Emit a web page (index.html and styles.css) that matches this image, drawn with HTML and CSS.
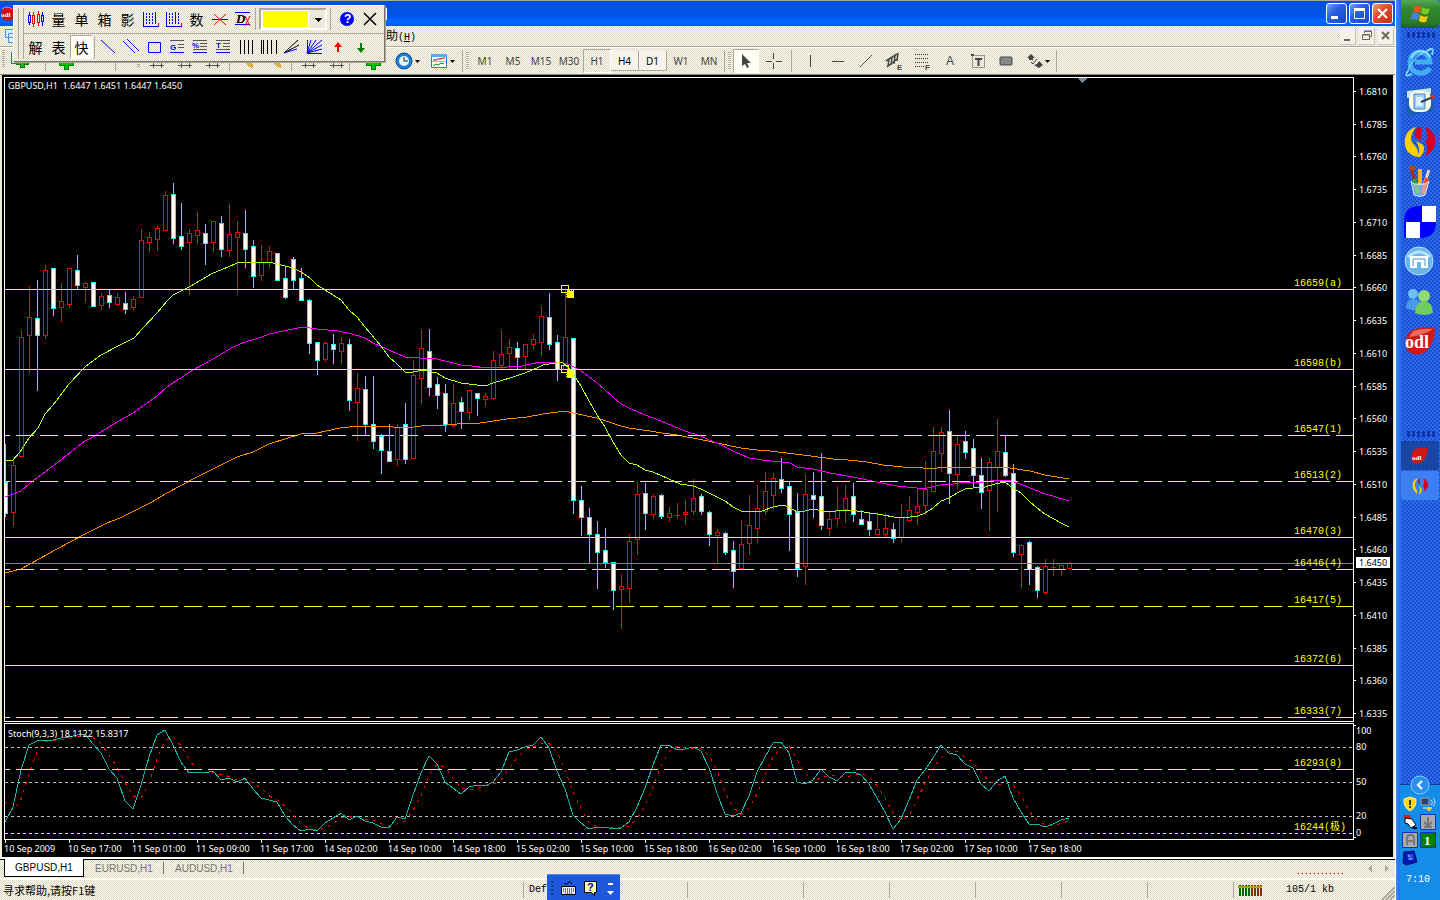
FILE: index.html
```html
<!DOCTYPE html>
<html lang="zh">
	<head>
		<meta charset="utf-8" />
		<title>GBPUSD,H1</title>
		<link rel="stylesheet" href="styles.css">
	</head>
	<body>
		<main class="app">
			<header class="titlebar">
				<svg class="app-icon" width="16" height="20"><circle cx="8" cy="10" r="7" fill="#c81414"/><path d="M2 5q5-4 10 0" fill="none" stroke="#f88"/><text x="1" y="13" class="logo-text">odl</text></svg>
				<span class="title-end"></span>
				<div class="win-btns">
					<button class="win-btn" aria-label="最小化"><svg width="19" height="19"><path d="M4 12h7v3H4z" fill="#fff"/></svg></button>
					<button class="win-btn" aria-label="还原"><svg width="19" height="19"><path d="M4.500 5.500h10v9h-10z" fill="none" stroke="#fff"/><path d="M4 4h11v3H4z" fill="#fff"/></svg></button>
					<button class="win-btn close" aria-label="关闭"><svg width="19" height="19"><path d="M5 5l9 9M14 5l-9 9" stroke="#fff" stroke-width="2"/></svg></button>
				</div>
			</header>

			<nav class="menubar">
				<svg class="doc-icon" width="16" height="18"><path d="M5.500 2.500h8v8h-8zM8.500 6.500h7v9h-7z" fill="#dff0ff" stroke="#4a90e0"/></svg>
				<a class="menu-item" href="#">助<span class="menu-key">(<u>H</u>)</span></a>
				<div class="mdi-btns">
					<button aria-label="最小化"><svg width="15" height="16"><path d="M4 11h6v2H4z" fill="#6b6958"/></svg></button>
					<button aria-label="还原"><svg width="15" height="16"><path d="M5.500 5V3.500h7v5H11M5 3h8M3 7h8" fill="none" stroke="#6b6958"/><path d="M3.500 6.500h7v5h-7z" fill="none" stroke="#6b6958"/></svg></button>
					<button aria-label="关闭"><svg width="15" height="16"><path d="M4 4l7 7M11 4l-7 7" stroke="#6b6958" stroke-width="2"/></svg></button>
				</div>
			</nav>

			<div class="toolbar">
				<svg class="tool-strip" width="391" height="28" shape-rendering="crispEdges">
					<g fill="#00c800" stroke="#008000"><path d="M20 9h4v5h4v3h-4v3h-4v-3h-4v-3h4zM64 9h4v5h5v4h-5v4h-4v-4h-5v-4h5zM371 9h4v5h5v4h-5v4h-4v-4h-5v-4h5z"/></g>
					<path d="M11.500 5v11h4" fill="none" stroke="#36c"/>
					<path d="M3.500 3v18" stroke="#aaa899" stroke-width="3" stroke-dasharray="1 1"/>
					<path d="M138.500 3v18" stroke="#aaa899" stroke-width="3" stroke-dasharray="1 1"/>
					<path d="M45.500 2v22M115.500 2v22M229.500 2v22M291.500 2v22M349.500 2v22" stroke="#aaa899"/>
					<path d="M150 18.500h14M153.500 16v5M161.500 16v5M178 18.500h14M181.500 16v5M189.500 16v5M206 18.500h14M209.500 16v5M217.500 16v5M302 18.500h14M305.500 16v5M313.500 16v5M330 18.500h14M333.500 16v5M341.500 16v5" stroke="#555"/>
					<path d="M243 11l10 9M271 11l10 9" stroke="#d8b040" stroke-width="4"/>
					<path d="M80 15h5M88 15h3M96 15h4M103 15h2" stroke="#222" stroke-width="2"/>
				</svg>
				<button class="tool menu-tool" aria-label="周期"><svg width="32" height="24"><circle cx="11" cy="12" r="8" fill="#1a7fd8" stroke="#0a4c96"/><circle cx="11" cy="12" r="5" fill="#e8f6ff"/><path d="M11 8v4h4" fill="none" stroke="#123"/><path d="M22 11h5l-2.500 3z"/></svg></button>
				<button class="tool menu-tool" aria-label="模板"><svg width="32" height="24"><path d="M3.500 5.500h15v13h-15z" fill="#fff" stroke="#2878c8"/><path d="M3 5h16v3H3z" fill="#5aaaf0"/><path d="M5 11h3l2-1h3l2-1h2" fill="none" stroke="#b00"/><path d="M5 17l3-2 2 1 3-2 3 1" fill="none" stroke="#080"/><path d="M4 12.500h14" stroke="#8bd"/><path d="M22 11h5l-2.500 3z"/></svg></button>
				<span class="sep"></span><span class="grip"></span>
				<button class="tool period">M1</button>
				<button class="tool period">M5</button>
				<button class="tool period">M15</button>
				<button class="tool period">M30</button>
				<button class="tool period pressed">H1</button>
				<button class="tool period raised">H4</button>
				<button class="tool period raised">D1</button>
				<button class="tool period">W1</button>
				<button class="tool period">MN</button>
				<span class="sep"></span><span class="grip"></span>
				<button class="tool pressed light" aria-label="光标"><svg width="24" height="24"><path d="M8 5v12l3-2 2 4 2-1-2-4h4z" fill="#444"/></svg></button>
				<button class="tool" aria-label="十字线"><svg width="28" height="24" shape-rendering="crispEdges"><path d="M14.500 4v6M14.500 14v6M7 12.500h6M17 12.500h6" stroke="#444"/></svg></button>
				<span class="sep space"></span>
				<button class="tool" aria-label="垂直线"><svg width="28" height="24" shape-rendering="crispEdges"><path d="M14.500 6v12" stroke="#444"/></svg></button>
				<button class="tool" aria-label="水平线"><svg width="28" height="24" shape-rendering="crispEdges"><path d="M8 12.500h12" stroke="#444"/></svg></button>
				<button class="tool" aria-label="趋势线"><svg width="28" height="24"><path d="M8 18L20 6" stroke="#444"/></svg></button>
				<button class="tool" aria-label="等距通道"><svg width="28" height="24"><path d="M6 12l11-7M7 18l10-8M9 10l-1 7M12 8l-1 8M15 6l-1 9M18 4l-1 8" stroke="#444" stroke-width="1.500"/><text x="17" y="21" class="ico-letter">E</text></svg></button>
				<button class="tool" aria-label="斐波纳契"><svg width="28" height="24" shape-rendering="crispEdges"><path d="M7 5.500h14M7 9.500h14M7 13.500h14M7 17.500h10" stroke="#444" stroke-dasharray="1 1"/><text x="17" y="21" class="ico-letter">F</text></svg></button>
				<button class="tool letter">A</button>
				<button class="tool" aria-label="文本标签"><svg width="28" height="24"><path d="M8.500 6.500h12v12h-12z" fill="none" stroke="#444" stroke-dasharray="1 1"/><path d="M11 9h7v2h-2.500v6h-2v-6H11z" fill="#444"/><path d="M7 5h3v2H7z" fill="#444"/></svg></button>
				<button class="tool" aria-label="矩形"><svg width="28" height="24"><rect x="8" y="8" width="12" height="8" rx="1" fill="#888" stroke="#444"/></svg></button>
				<button class="tool menu-tool" aria-label="箭头"><svg width="32" height="24"><path d="M9 5l4 4h-2v2H7V9H5zM17 19l4-3-4-4-2 3-3 1z" fill="#444"/><path d="M9 13l2 2 4-5" stroke="#444" fill="none"/><path d="M23 11h5l-2.500 3z"/></svg></button>
				<span class="sep"></span>
			</div>

			<section class="chart">
				<div class="pane-row price-row">
					<svg class="pane" id="price"></svg>
					<svg class="axis" id="priceAxis"></svg>
				</div>
				<div class="pane-row stoch-row">
					<svg class="pane" id="stoch"></svg>
					<svg class="axis" id="stochAxis"></svg>
				</div>
				<svg class="time-axis" id="timeAxis"></svg>
			</section>

			<div class="tabs">
				<button class="tab active">GBPUSD,H1</button>
				<button class="tab">EURUSD,H1</button>
				<button class="tab">AUDUSD,H1</button>
				<span class="red-dots"></span>
				<svg class="tab-arrows" width="24" height="10"><path d="M5 1v7L1 4.500zM18 1v7l4-3.500z" fill="#aaa899"/></svg>
			</div>

			<footer class="status">
				<span class="cell help">寻求帮助,请按F1键</span>
				<span class="cell profile">Def</span>
				<span class="cell wide"></span>
				<span class="cell"></span><span class="cell"></span><span class="cell"></span><span class="cell"></span><span class="cell"></span>
				<span class="cell traffic">
					<svg width="24" height="13" shape-rendering="crispEdges"><path d="M1.500 1v11M4.500 1v11M7.500 1v11M10.500 1v11" stroke="#060" stroke-width="2"/><path d="M13.500 1v11M16.500 1v11M19.500 1v11M22.500 1v11" stroke="#8a2a00" stroke-width="2"/><path d="M0 3h24" stroke="#b8a000" stroke-width="2"/></svg>
					<span>105/1 kb</span>
				</span>
				<svg class="sizer" width="14" height="14"><path d="M1 14L14 1M5 14l9-9M9 14l5-5" stroke="#aaa899" stroke-width="2"/></svg>
			</footer>
		</main>

		<aside class="taskbar">
			<button class="start" aria-label="开始"><svg width="24" height="24"><path d="M5 5q4-3 7 0l-1 6q-4-2-7 0z" fill="#f05020"/><path d="M13 5q4 3 8 1l-2 6q-4 1-7-1z" fill="#7cc820"/><path d="M3 12q4-3 7 0l-1 6q-4-2-7 0z" fill="#4a80f0"/><path d="M11 13q4 3 8 1l-2 6q-4 1-7-1z" fill="#f8c818"/></svg></button>
			<span class="dots"></span>
			<a class="quick" href="#" aria-label="Internet Explorer"><svg width="32" height="32"><path d="M4 25Q-1 32 8 28M23 5Q31-1 28 9" fill="none" stroke="#6ad0ff" stroke-width="2"/><path d="M26 22q-4 6-11 5-9-2-9-11 1-9 10-10 9 1 10 10H11" fill="none" stroke="#40b0f0" stroke-width="5"/><path d="M7 12q3-7 10-7 6 0 9 6" fill="none" stroke="#8ce0ff" stroke-width="2"/><path d="M3 27Q9 8 28 3" fill="none" stroke="#9be6ff"/></svg></a>
			<a class="quick" href="#" aria-label="Outlook"><svg width="32" height="32"><path d="M2 4l26-3 2 24-27 5z" fill="#1860b0"/><path d="M3 5l24-3v6L3 12z" fill="#bfe4ff"/><rect x="5" y="5" width="22" height="21" rx="8" fill="#fffbe0"/><path d="M10 8h11v15H10z" fill="#9bd0ff" stroke="#3a80d0"/><path d="M12 11h7v9h-7z" fill="#d8f0ff"/><path d="M17 16l12-5" stroke="#245" stroke-width="2"/><circle cx="29" cy="11" r="2" fill="#d03020"/></svg></a>
			<a class="quick" href="#" aria-label="搜狗"><svg width="34" height="34"><path d="M13 2C3 4-2 17 5 27q4 4 9 5 3-6-2-11-6-6-3-12 1-4 4-7z" fill="#ffd000"/><path d="M13 16l7 4q3 5-3 12h-3q5-7-1-16z" fill="#ffd000"/><path d="M22 2c10 3 14 16 6 25q-3 3-6 4 5-8 0-14 4-4 2-9-1-3-2-6z" fill="#d80020"/><path d="M15 2h4l-1 14-6-4q-1-6 3-10z" fill="#d80020"/></svg></a>
			<a class="quick" href="#" aria-label="画图"><svg width="30" height="32"><path d="M6 2l4 14" stroke="#a03010" stroke-width="3"/><path d="M24 4l-5 15" stroke="#e8d0c0" stroke-width="3"/><path d="M15 3v16" stroke="#f0b020" stroke-width="4"/><path d="M9 13l4 14" stroke="#30a030" stroke-width="4"/><path d="M22 12l-4 16" stroke="#f04818" stroke-width="4"/><path d="M6 15l3 14q6 3 11 0l4-14-4 3H9z" fill="#dff" fill-opacity=".45" stroke="#cfe4f4"/><path d="M4 0h6v4H4z" fill="#b04818"/></svg></a>
			<a class="quick" href="#" aria-label="行情"><svg width="32" height="32"><path d="M0 16Q0 0 16 0h16v16Q32 32 16 32H0z" fill="#00f"/><path d="M18 0h14v16H18zM2 16h14v16H2z" fill="#fff"/></svg></a>
			<a class="quick" href="#" aria-label="浏览器"><svg width="32" height="32"><circle cx="15" cy="15" r="14" fill="#6ab4e8" stroke="#b8e0ff"/><path d="M4 11q11-10 22 0" stroke="#b8e0ff" stroke-width="3" fill="none"/><path d="M6 10h18v12h-7v-6h-4v6H6z" fill="#fff"/><path d="M9 13v7M9 13h12M21 13v7" fill="none" stroke="#4890d0"/></svg></a>
			<a class="quick" href="#" aria-label="Messenger"><svg width="32" height="32"><circle cx="9" cy="8" r="5" fill="#6cc0f8"/><path d="M2 22q0-9 8-9 6 0 7 7l-4 4q-6 1-11-2z" fill="#4a9ae8"/><circle cx="20" cy="10" r="6" fill="#90dc70"/><path d="M11 27q1-12 10-12 7 1 8 12-9 4-18 0z" fill="#70cc60"/></svg></a>
			<a class="quick" href="#" aria-label="ODL"><svg width="34" height="32"><path d="M9 4q11-4 23-2 0 17-11 25-11 4-17-3-5-12 5-20z" fill="#d01818"/><path d="M10 5q10-3 20-2-8 6-24 8z" fill="#f06858"/><text x="2" y="22" class="odl">odl</text></svg></a>
			<div class="tasks">
				<span class="dots"></span>
				<button class="task current" aria-label="ODL"><svg width="20" height="18"><path d="M5 2q7-2 13-1 0 9-7 15-7 2-9-2-2-8 3-12z" fill="#d01818"/><text x="2" y="13" class="logo-text">odl</text></svg></button>
				<button class="task" aria-label="搜狗"><svg width="18" height="18"><path d="M7 1Q0 3 2 12l4 5q1-3-1-5-3-5 2-11zM8 9q5 3 1 8H8q2-4 0-8z" fill="#ffd000"/><path d="M12 1q6 3 5 9l-4 5q1-4-1-6 2-3 0-8zM9 1v7q-4-3 0-7z" fill="#d80020"/></svg></button>
			</div>
			<div class="tray">
				<button class="tray-toggle" aria-label="展开"><svg width="20" height="20"><circle cx="10" cy="10" r="9" fill="#2a90f0" stroke="#8cd0ff"/><path d="M12 6l-4 4 4 4" fill="none" stroke="#fff" stroke-width="2"/></svg></button>
				<div class="tray-icons">
					<svg width="18" height="18"><path d="M9 2l6 2q1 8-6 12Q2 12 3 4z" fill="#ffd818" stroke="#fff0a0"/><path d="M8 5h2v5H8zM8 11h2v2H8z" fill="#333"/></svg>
					<svg width="18" height="18"><path d="M2 3h8v7H2z" fill="#346" stroke="#9ab"/><path d="M12 5q3 2 0 5M14 3q4 4 0 8" fill="none" stroke="#cde"/><path d="M4 12h9v2H4z" fill="#9bc"/><circle cx="10" cy="14" r="2" fill="#fc3"/></svg>
					<svg width="18" height="18"><path d="M2 2h6l2 3-3 2-4-2z" fill="#e01818"/><path d="M4 5l7 1 4 6-5 3-3-4-3-1z" fill="#fff" stroke="#000"/><path d="M11 14h5v2h-4z" fill="#000"/></svg>
					<svg width="18" height="18"><path d="M1.500 1.500h15v15h-15z" fill="#aaa" stroke="#1030c0"/><path d="M9 4v8M5 9l4 4 4-4M5 14h8" fill="none" stroke="#777" stroke-width="2"/></svg>
					<svg width="18" height="18"><path d="M1.500 1.500h15v15h-15z" fill="#aaa" stroke="#1030c0"/><path d="M6 14V6l2-2h3l2 2v8M6 10h6" fill="none" stroke="#777" stroke-width="2"/></svg>
					<svg width="18" height="18"><path d="M1.500 1.500h15v15h-15z" fill="#008000" stroke="#1030c0"/><text x="5" y="14" class="num">1</text></svg>
					<svg width="18" height="18"><path d="M3 3l10-1 3 11-11 3-3-2z" fill="#0018b0" stroke="#001060"/><path d="M6 5h6l1 6H7z" fill="#2048e8"/><path d="M7 7h2M8 10h3" stroke="#adf"/></svg>
				</div>
				<time class="clock">7:10</time>
			</div>
		</aside>

		<!-- 浮动画线工具 -->
		<div class="palette">
			<span class="palette-grip"></span>
			<div class="palette-rows">
				<div class="palette-row first">
					<button class="pt" aria-label="K线"><svg width="18" height="18" shape-rendering="crispEdges"><path d="M2.500 2v3M2.500 12v3M1.500 5v7h2V5zM15.500 2v3M15.500 11v5M14.500 5v6h2V5z" fill="none" stroke="#00f"/><path d="M6.500 2v3M6.500 13v4M5.500 5v8h2V5zM11.500 1v3M11.500 12v4M10.500 4v8h2V4z" fill="none" stroke="#f00"/></svg></button>
					<button class="pt">量</button>
					<button class="pt">单</button>
					<button class="pt">箱</button>
					<button class="pt">影</button>
					<button class="pt" aria-label="周期线"><svg width="18" height="18" shape-rendering="crispEdges"><path d="M1.500 2v14h15M13.500 2v12" fill="none" stroke="#00f"/><path d="M4.500 3v11M7.500 3v11M10.500 3v11" stroke="#00f" stroke-dasharray="2 1"/><path d="M16.500 13v3" stroke="#f00"/></svg></button>
					<button class="pt" aria-label="周期线二"><svg width="18" height="18" shape-rendering="crispEdges"><path d="M1.500 2v14h15M10.500 2v12" fill="none" stroke="#00f"/><path d="M4.500 3v11M7.500 3v11M13.500 3v11" stroke="#00f" stroke-dasharray="2 1"/><path d="M16.500 13v3" stroke="#f00"/></svg></button>
					<button class="pt">数</button>
					<button class="pt" aria-label="删除线"><svg width="18" height="18"><path d="M1 9.500h16" stroke="#00f"/><path d="M3 4l12 11M15 4L3 15" stroke="#f00"/></svg></button>
					<button class="pt" aria-label="删除全部"><svg width="18" height="18"><path d="M1 2.500h15M1 14.500h15" stroke="#00f"/><path d="M11 6l5 10M16 6l-5 10" stroke="#f00"/><text x="2" y="13" class="del">D</text></svg></button>
					<span class="sep"></span>
					<select class="color" aria-label="颜色"><option>&nbsp;</option></select>
					<span class="sep"></span>
					<button class="pt wide" aria-label="帮助"><svg width="18" height="18"><circle cx="9" cy="9" r="7" fill="#00f"/><text x="6" y="13" class="help-mark">?</text></svg></button>
					<button class="pt" aria-label="关闭"><svg width="18" height="18"><path d="M3 3l12 12M15 3L3 15" stroke="#000" stroke-width="1.500"/></svg></button>
				</div>
				<div class="palette-row">
					<button class="pt">解</button>
					<button class="pt">表</button>
					<button class="pt pressed light">快</button>
					<span class="sep"></span>
					<button class="pt" aria-label="直线"><svg width="18" height="18"><path d="M2 2l14 13" stroke="#00f"/></svg></button>
					<button class="pt" aria-label="平行线"><svg width="18" height="18"><path d="M1 3l12 12M5 1l12 12" stroke="#00f"/></svg></button>
					<button class="pt" aria-label="矩形"><svg width="18" height="18"><path d="M3.500 4.500h12v10h-12z" fill="none" stroke="#00f"/></svg></button>
					<button class="pt" aria-label="黄金分割"><svg width="18" height="18" shape-rendering="crispEdges"><path d="M2 2.500h14M10 6.500h6M10 9.500h6" stroke="#555"/><path d="M2 14.500h14" stroke="#00f"/><text x="2" y="12" class="pal-letter">G</text></svg></button>
					<button class="pt" aria-label="百分比线"><svg width="18" height="18" shape-rendering="crispEdges"><path d="M2 2.500h14M9 5.500h7M9 8.500h7M2 11.500h14" stroke="#555"/><path d="M2 14.500h14" stroke="#00f"/><text x="1" y="10" class="pal-letter">%</text></svg></button>
					<button class="pt" aria-label="目标线"><svg width="18" height="18" shape-rendering="crispEdges"><path d="M2 2.500h14M9 5.500h7M9 8.500h7M2 11.500h14" stroke="#555"/><path d="M2 14.500h14" stroke="#00f"/><text x="2" y="10" class="pal-letter">T</text></svg></button>
					<button class="pt" aria-label="等周期线"><svg width="18" height="18" shape-rendering="crispEdges"><path d="M3.500 2v14M7.500 2v14M11.500 2v14M15.500 2v14" stroke="#000"/></svg></button>
					<button class="pt" aria-label="斐波那契周期"><svg width="18" height="18" shape-rendering="crispEdges"><path d="M1.500 2v14M3.500 2v14M7.500 2v14M11.500 2v14M16.500 2v14" stroke="#000"/></svg></button>
					<button class="pt" aria-label="阻速线"><svg width="18" height="18"><path d="M1 15L15 2M1 15l15-8" stroke="#000"/><path d="M1 15l13-4" stroke="#00f"/></svg></button>
					<button class="pt" aria-label="甘氏线"><svg width="18" height="18"><path d="M1.500 2v13.500H16M1 15L5 2M1 15l9-13M1 15L16 2M1 15l15-8M1 15l15-4" fill="none" stroke="#00f"/></svg></button>
					<button class="pt" aria-label="上箭头"><svg width="18" height="18"><path d="M9 4l4 5h-3v5H8V9H5z" fill="#f00"/></svg></button>
					<button class="pt" aria-label="下箭头"><svg width="18" height="18"><path d="M9 15l4-5h-3V5H8v5H5z" fill="#008000"/></svg></button>
				</div>
			</div>
		</div>

		<!-- 输入法 -->
		<div class="ime">
			<span class="ime-grip"></span>
			<svg width="16" height="18"><path d="M4 4q2 3 4 0t4 1" fill="none" stroke="#000"/><path d="M1.500 7.500h14v8h-14z" fill="#eee" stroke="#000"/><path d="M3 10h11M3 12h11M5 14h7" stroke="#000" stroke-dasharray="1 1"/></svg>
			<svg width="16" height="18"><path d="M2.500 2.500h12v11h-2v3l-3-3h-7z" fill="#ffffb0" stroke="#000"/><text x="5" y="12" class="ime-mark">?</text></svg>
			<svg width="12" height="18"><path d="M4 4h5v2H4zM3 12h7l-3.500 4z" fill="#fff"/></svg>
		</div>

		<script src="script.js"></script>
	</body>
</html>
```
FILE: styles.css
```css
*{margin: 0;padding: 0;box-sizing: border-box;}
html,body{height: 100%;}
body
{
	display: flex;
	overflow: hidden;
	background: #ece9d8;
	font-family: "Noto Sans","Noto Sans CJK SC",sans-serif;
	font-size: 11px;
	color: #000;
}
button,select
{
	border: 0;
	background: none;
	font: inherit;
	color: inherit;
}
svg{display: block;}
a{color: inherit;text-decoration: none;}

/* 16位色抖动底纹 */
.app,.palette
{
	background: repeating-conic-gradient(#fffdf0 0 25%,#d9d6c6 0 50%) 0 0/2px 2px;
}
.app
{
	flex: 1;
	min-width: 0;
	display: flex;
	flex-direction: column;
}

.titlebar
{
	height: 26px;
	border-top: 1px solid #aca899;
	display: flex;
	align-items: center;
	background: linear-gradient(#0050e0,#0054e8 60%,#0068ff 80%,#0058e8);
}
.title-end
{
	width: 2px;
	height: 12px;
	margin-left: 369px;
	background: #fff;
}
.app-icon{flex: none;}
.win-btns
{
	display: flex;
	gap: 2px;
	margin-left: auto;
	padding-right: 2px;
}
.win-btn
{
	width: 21px;
	height: 21px;
	border: 1px solid #fff;
	border-radius: 3px;
	background: linear-gradient(135deg,#7aa4f4,#2860e0 40%,#1848c8);
}
.win-btn.close{background: linear-gradient(135deg,#f0a080,#e05030 40%,#c03010);}

.menubar
{
	height: 21px;
	display: flex;
	align-items: center;
	border-bottom: 1px solid #aca899;
}
.menu-item
{
	margin-left: 370px;
	font-family: "Noto Sans CJK SC",sans-serif;
	font-size: 12px;
	line-height: 18px;
}
.menu-key
{
	font-family: "Liberation Mono",monospace;
	font-size: 10px;
}
.mdi-btns
{
	display: flex;
	gap: 3px;
	margin-left: auto;
	padding-right: 1px;
}
.mdi-btns button
{
	width: 16px;
	height: 17px;
	background: #f4f2e8;
	border-right: 1px solid #c8c5b2;
	border-bottom: 1px solid #c8c5b2;
}

.toolbar
{
	height: 28px;
	display: flex;
	align-items: center;
	border-top: 1px solid #fff;
	border-bottom: 1px solid #8a8672;
}
.tool-strip{flex: none;}
.tool
{
	height: 24px;
	width: 28px;
	display: flex;
	align-items: center;
	justify-content: center;
}
.menu-tool{width: 35px;}
.period
{
	color: #444;
	font-size: 10px;
}
.pressed
{
	border: 1px solid #fff;
	border-top-color: #aca899;
	border-left-color: #aca899;
}
.light{background: #fffef6;}
.raised
{
	height: 20px;
	color: #000;
	border-right: 1px solid #aca899;
	border-bottom: 1px solid #aca899;
	background: #f6f4ea;
}
.tool.light{width: 26px;}
.letter
{
	color: #444;
	font-family: "Liberation Sans",sans-serif;
	font-size: 12px;
}
.sep
{
	width: 1px;
	height: 22px;
	margin: 0 1px;
	background: #aca899;
}
.space{margin: 0 4px;}
.grip
{
	width: 3px;
	height: 18px;
	margin: 0 2px;
	background: repeating-linear-gradient(#aca899 0 1px,#fffdf0 1px 2px);
}
.ico-letter,.pal-letter{font: bold 8px "Liberation Sans",sans-serif;fill: #444;}
.pal-letter{fill: #00f;}

/* 图表 */
.chart
{
	flex: 1;
	min-height: 0;
	margin: 0 2px;
	padding: 2px 0 0 2px;
	display: flex;
	flex-direction: column;
	background: #000;
}
.pane-row{display: flex;}
.price-row{flex: 1;min-height: 0;}
.stoch-row{height: 117px;margin-top: 1px;}
.pane
{
	flex: 1;
	min-width: 0;
	height: 100%;
	border: 1px solid #fff;
}
.axis
{
	width: 39px;
	height: 100%;
}
.time-axis
{
	width: 100%;
	height: 17px;
}
.chart line,.chart path,.chart rect,.chart polyline{shape-rendering: crispEdges;}
.chart text
{
	fill: #fff;
	font-size: 9px;
}
.chart .level-text
{
	fill: #ff0;
	font-family: "Liberation Mono","Noto Sans CJK SC",monospace;
	font-size: 10px;
}
.chart .now-text{fill: #000;}
.level{stroke: #ff0;}
.dash{stroke-dasharray: 18 6;stroke-dashoffset: 13;}
.grid{stroke: #c0c0c0;stroke-dasharray: 3 3;}
.low{stroke: #ff0;stroke-dasharray: 3 3;}
.now{stroke: #778899;}
.tick{stroke: #fff;}
.up{fill: none;stroke: #f00;}
.body-up{fill: #000;stroke: #f00;}
.down{fill: none;stroke: #0ff;}
.body-down{fill: #fff;stroke: #0ff;}
.ma{fill: none;}
.fast{stroke: #adff2f;}
.mid{stroke: #f0f;}
.slow{stroke: #ff8c00;}
.k{stroke: #20b2aa;}
.d{stroke: #f00;stroke-dasharray: 3 5;}
.anchor{fill: none;stroke: #ff0;}
.mark{fill: #ff0;stroke: #ff0;stroke-dasharray: 1 1;}

.tabs
{
	height: 23px;
	display: flex;
	align-items: flex-start;
	padding-left: 4px;
	border-top: 2px solid #fff;
	border-bottom: 2px solid #fffdf0;
	background: linear-gradient(#000,#000) 0 0/100% 1px no-repeat;
}
.tab
{
	width: 80px;
	height: 18px;
	color: #77756a;
	font-family: "Liberation Sans",sans-serif;
	font-size: 10px;
	background: linear-gradient(#77756a,#77756a) 100% 50%/1px 12px no-repeat;
}
.tab.active
{
	color: #000;
	border: 1px solid #000;
	border-top: 0;
	background: #fff;
}
.red-dots
{
	width: 45px;
	height: 1px;
	margin: 14px 24px 0 auto;
	background: repeating-linear-gradient(90deg,#f00 0 1px,transparent 1px 4px);
}
.tab-arrows{margin: 5px 4px 0 0;}

.status
{
	height: 20px;
	display: flex;
	align-items: center;
}
.cell
{
	width: 86px;
	height: 16px;
	line-height: 16px;
	border-left: 1px solid #aca899;
}
.help
{
	flex: 1;
	padding-left: 3px;
	border: 0;
	font-family: "Noto Sans CJK SC",sans-serif;
}
.profile{width: 164px;padding-left: 5px;}
.profile,.traffic{font-family: "Liberation Mono",monospace;font-size: 10px;}
.wide{width: 116px;}
.traffic
{
	width: 148px;
	display: flex;
	align-items: center;
	gap: 24px;
	padding-left: 4px;
}
.sizer{align-self: flex-end;}

/* 任务栏 */
.taskbar
{
	width: 45px;
	padding-left: 4px;
	display: flex;
	flex-direction: column;
	align-items: center;
	border-left: 1px solid #fff;
	background: linear-gradient(90deg,#3a8cf8 0,#2460dc 6px,transparent 7px),
		repeating-conic-gradient(#2d6bee 0 25%,#1c4fd0 0 50%) 0 0/4px 4px;
}
.start
{
	width: 39px;
	height: 28px;
	padding-left: 8px;
	border-radius: 0 4px 6px 0;
	background: linear-gradient(#58a858,#2f8a2f 30%,#2a7c2a 80%,#1c5c1c);
}
.dots
{
	width: 29px;
	height: 6px;
	margin: 4px 0;
	background: radial-gradient(circle,#0830a0 1px,transparent 2px) 0 0/5px 3px;
}
.quick
{
	width: 36px;
	height: 40px;
	display: flex;
	align-items: center;
	justify-content: center;
}
.tasks
{
	margin-top: 65px;
	display: flex;
	flex-direction: column;
	align-items: center;
}
.task
{
	width: 38px;
	height: 29px;
	margin-bottom: 1px;
	display: flex;
	align-items: center;
	justify-content: center;
	border-radius: 2px;
	background: #3c80f4;
}
.task.current{background: #1846a4;}
.tray
{
	width: 40px;
	height: 116px;
	margin-top: auto;
	border-top: 1px solid #0a3ca0;
	background: #148ce8;
}
.tray-toggle
{
	display: block;
	width: 20px;
	margin: -10px auto 0;
}
.tray-icons
{
	display: flex;
	flex-wrap: wrap;
	padding-left: 1px;
}
.clock
{
	display: block;
	margin-top: 5px;
	padding-left: 6px;
	color: #fff;
	font: 10px/16px "Liberation Mono",monospace;
}
.logo-text{font: bold 7px "Liberation Serif",serif;fill: #fff;}
.odl{font: bold 18px "Liberation Serif",serif;fill: #fff;}
.num{font: bold 13px "Liberation Serif",serif;fill: #fff;}

.palette
{
	position: absolute;
	left: 13px;
	top: 5px;
	width: 372px;
	height: 57px;
	display: flex;
	border: 1px solid #fff;
	border-right-color: #77756a;
	border-bottom-color: #77756a;
	box-shadow: 1px 1px 0 #aca899;
}
.palette-grip
{
	width: 6px;
	margin: 2px 0 2px 4px;
	border: 1px solid #aca899;
	border-top: 0;
	border-bottom: 0;
}
.palette-rows{flex: 1;}
.palette-row
{
	height: 27px;
	display: flex;
	align-items: center;
}
.first{padding-bottom: 2px;}
.palette-row + .palette-row{border-top: 1px solid #aca899;}
.pt
{
	width: 23px;
	height: 24px;
	display: flex;
	align-items: center;
	justify-content: center;
	font-family: "Noto Sans CJK SC",sans-serif;
	font-size: 14px;
}
.pt.wide{margin-left: 3px;}
.color
{
	appearance: none;
	width: 68px;
	height: 22px;
	margin: 0 2px;
	border: 2px solid #aca899;
	border-right-color: #fff;
	border-bottom-color: #fff;
	background: linear-gradient(#ff0,#ff0) 2px 1px/45px 16px no-repeat,
		conic-gradient(from -45deg at 50% 100%,#000 0 90deg,transparent 0) 54px 8px/7px 4px no-repeat,
		linear-gradient(#ece9d8,#ece9d8) 100% 0/16px 100% no-repeat,
		#fff;
}
.del{font: italic bold 13px "Liberation Serif",serif;}
.help-mark{font: bold 12px "Liberation Sans",sans-serif;fill: #fff;}

.ime
{
	position: absolute;
	left: 547px;
	bottom: 0;
	width: 73px;
	height: 26px;
	display: flex;
	align-items: center;
	gap: 6px;
	padding-left: 4px;
	border-top: 1px solid #4c90f8;
	background: #2058dc;
}
.ime-grip
{
	width: 3px;
	height: 14px;
	background: repeating-linear-gradient(#1040a0 0 2px,#2058dc 2px 4px);
}
.ime-mark{font: bold 11px "Liberation Sans",sans-serif;fill: #00a;}
```
FILE: script.js
```js
// [最高, 实体上沿, 实体下沿, 最低, 1阳 0阴]
var bars=[
[444,482,513,516,0],[458,465,512,526,1],[330,337,456,456,1],[286,317,335,372,1],[280,318,335,390,0],
[265,270,335,338,1],[268,268,308,315,0],[283,301,307,321,1],[268,268,304,307,1],[255,270,285,288,0],
[282,283,287,302,1],[282,282,306,306,0],[293,296,305,309,1],[290,295,302,307,0],[293,297,304,305,1],
[292,303,309,313,0],[296,299,307,310,1],[229,240,297,297,1],[232,237,242,251,1],[225,228,239,250,1],
[191,195,230,230,1],[183,194,238,243,0],[203,236,246,249,0],[229,233,242,294,1],[212,230,235,243,1],
[224,233,243,264,0],[221,221,242,251,1],[216,223,249,256,0],[204,234,250,256,1],[221,232,237,293,1],
[210,233,249,267,0],[240,246,276,287,0],[245,262,275,280,1],[246,251,262,267,1],[253,253,280,280,0],
[266,278,297,298,0],[257,259,280,289,0],[268,278,300,300,0],[299,300,343,353,0],[342,342,360,374,0],
[341,343,359,361,1],[334,344,349,363,0],[337,343,351,363,1],[339,344,400,410,0],[373,388,402,440,1],
[376,389,424,435,0],[376,424,441,448,0],[434,436,450,473,0],[424,451,461,461,0],[424,427,459,465,1],
[403,424,459,463,0],[360,375,458,458,1],[329,348,378,403,1],[329,351,387,395,0],[377,384,395,408,0],
[384,393,424,431,0],[384,403,425,427,1],[397,402,411,428,0],[390,390,412,419,1],[393,393,398,415,0],
[393,396,399,406,1],[351,360,398,399,1],[330,354,365,368,1],[339,347,353,368,1],[342,348,357,368,0],
[344,344,356,368,1],[334,339,344,348,1],[306,316,342,355,1],[293,317,344,349,0],[335,342,369,380,0],
[290,337,369,369,1],[338,338,500,513,0],[486,500,517,535,0],[508,517,534,563,0],[521,534,552,588,0],
[528,550,562,567,0],[562,562,590,609,0],[574,586,589,628,1],[534,541,588,602,1],[482,494,539,554,1],
[483,493,513,529,0],[494,496,514,518,1],[494,495,516,518,0],[507,513,517,521,1],[503,515,515,518,1],
[500,512,514,524,1],[479,498,511,514,1],[494,496,511,514,0],[511,512,534,545,0],[529,532,535,562,1],
[532,533,552,554,0],[541,550,571,587,0],[520,544,568,568,1],[495,525,543,554,1],[485,508,528,542,1],
[472,491,511,514,1],[473,478,495,508,1],[458,479,488,492,0],[482,486,514,550,0],[493,512,568,576,0],
[474,494,566,584,1],[472,495,499,517,0],[453,496,525,529,0],[512,519,528,535,1],[486,510,518,525,1],
[485,498,509,522,1],[483,496,514,521,0],[510,519,524,524,0],[512,521,529,535,0],[512,529,534,534,1],
[513,528,534,537,1],[523,529,538,542,0],[504,517,537,542,1],[496,510,520,520,1],[488,506,512,524,1],
[461,489,505,514,1],[427,451,491,491,1],[427,432,453,471,1],[410,431,473,503,0],[435,444,474,488,1],
[431,441,452,458,0],[439,448,475,487,0],[458,475,492,508,0],[458,462,490,530,1],[419,451,467,511,1],
[435,452,475,476,0],[464,473,552,556,0],[544,545,554,587,1],[541,542,569,584,0],[566,567,590,597,0],
[559,566,592,594,1],[559,567,567,575,1],[565,565,569,575,1],[562,563,568,568,1]
];

// 均线
var fast='5,460 13,460 20,452 29,438 38,428 45,414 53,405 69,384 85,367 101,355 120,345 134,338 142,329 157,313 167,301 173,295 189,287 213,273 221,270 237,263 245,262 258,263 269,262 285,266 293,268 301,272 310,278 317,285 333,295 341,300 349,310 357,317 365,327 381,346 389,357 397,364 405,372 413,372 423,370 437,373 445,378 461,383 485,386 493,383 510,378 525,373 537,368 543,365 562,362 570,369 581,386 589,401 597,415 605,427 613,442 621,455 629,463 637,465 645,470 653,472 669,479 680,484 693,486 701,489 717,497 725,501 733,507 741,511 749,512 762,511 773,507 783,505 789,507 797,512 805,511 813,509 829,512 843,510 857,511 870,513 883,515 894,517 910,517 918,516 925,513 933,508 941,501 949,498 957,493 965,489 973,488 985,487 995,484 1005,482 1013,488 1021,493 1029,501 1037,508 1045,514 1061,523 1069,527';
var mid='5,497 13,494 21,491 30,483 37,478 45,472 61,460 77,447 85,441 93,437 117,422 133,413 157,396 167,387 173,383 193,370 213,359 233,347 245,342 262,337 269,334 283,331 293,329 303,327 317,329 338,331 348,333 359,336 365,338 373,343 389,350 405,357 420,358 437,359 445,361 461,365 472,366 485,368 507,367 522,366 540,362 560,362 570,365 580,370 597,383 613,397 621,404 629,408 645,415 661,421 685,431 701,436 709,440 717,443 733,451 749,458 762,460 790,463 797,467 813,469 830,473 853,477 877,482 897,486 917,488 927,488 941,485 953,484 965,482 983,482 997,480 1008,480 1023,485 1045,494 1053,496 1069,501';
var slow='5,573 21,569 57,549 70,542 85,534 107,523 120,518 150,503 167,493 197,477 213,469 237,457 253,452 269,444 301,434 317,433 340,428 359,426 373,426 393,427 408,428 427,425 447,425 467,423 480,423 507,419 527,417 543,414 565,411 573,413 597,418 621,426 629,428 650,431 662,433 677,435 703,440 717,443 741,448 757,450 770,451 803,455 833,459 848,460 867,462 883,465 903,467 923,468 937,468 942,467 953,468 957,467 1003,467 1030,471 1045,475 1069,479';

// 随机指标 %K
var k=[822,807,770,745,741,740,740,738,737,735,734,744,753,769,778,801,809,785,757,735,730,745,762,773,772,773,771,780,778,782,778,789,798,800,802,816,825,831,829,831,823,818,813,820,816,821,823,827,828,817,819,795,773,756,764,782,788,794,787,785,786,782,772,752,750,747,745,737,748,771,789,815,823,829,827,827,829,828,822,807,788,765,745,745,750,749,747,751,768,793,814,816,813,796,772,757,743,742,753,782,784,780,769,777,781,773,772,775,784,798,812,829,819,800,780,770,758,745,753,755,764,768,784,791,781,776,798,812,824,824,827,824,820,818];

// 水平位
var levels=[
['16659(a)',289,0],['16598(b)',369,0],['16547(1)',435,1],['16513(2)',481,1],['16470(3)',537,0],
['16446(4)',569,1],['16417(5)',606,1],['16372(6)',665,0],['16333(7)',717,1]
];
var times=['10 Sep 2009','10 Sep 17:00','11 Sep 01:00','11 Sep 09:00','11 Sep 17:00','14 Sep 02:00','14 Sep 10:00','14 Sep 18:00','15 Sep 02:00','15 Sep 10:00','15 Sep 18:00','16 Sep 02:00','16 Sep 10:00','16 Sep 18:00','17 Sep 02:00','17 Sep 10:00','17 Sep 18:00'];

function line(cls,y)
{
	return '<line class="'+cls+'" x1="0" x2="100%" y1="'+y+'" y2="'+y+'"/>';
}
function label(s,y)
{
	return '<text class="level-text" x="100%" dx="-59" y="'+y+'">'+s+'</text>';
}
function group(x,y,s)
{
	return '<g transform="translate('+(-x)+','+(-y)+')">'+s+'</g>';
}

function drawPrice()
{
	var s='',t=line('now',485.5),i,b,x,c,y;
	for(i=0;i<bars.length;i++)
	{
		b=bars[i];
		x=5.5+i*8;
		c=b[4]?'up':'down';
		s+='<path class="'+c+'" d="M'+x+' '+b[0]+'V'+b[1]+'M'+x+' '+b[2]+'V'+(b[3]+1)+'"/>';
		s+='<rect class="body-'+c+'" x="'+(x-2)+'" y="'+(b[1]+0.5)+'" width="4" height="'+Math.max(b[2]-b[1],0.1)+'"/>';
	}
	s+='<polyline class="ma slow" points="'+slow+'"/><polyline class="ma mid" points="'+mid+'"/><polyline class="ma fast" points="'+fast+'"/>';
	for(i=0;i<levels.length;i++)
	{
		y=levels[i][1]-78;
		t+=line(levels[i][2]?'level dash':'level',y+0.5)+label(levels[i][0],y-3);
	}
	s+='<path class="anchor" d="M561.5 285.5h7v7h-7zM561.5 365.5h7v7h-7z"/><path class="mark" d="M566.5 290.5h7v7h-7zM566.5 370.5h7v7h-7z"/>';
	document.getElementById('price').innerHTML=group(5,78,s)+t+'<text x="3" y="11" xml:space="preserve">GBPUSD,H1  1.6447 1.6451 1.6447 1.6450</text><path d="M1072 0h10l-5 5z" fill="#778899"/>';
}

function drawStoch()
{
	var p='',d='',i,v;
	for(i=0;i<k.length;i++)
	{
		v=i==0?802:i==1?810:(k[i]+k[i-1]+k[i-2])/3;
		p+=(5+i*8)+','+k[i]+' ';
		d+=(5+i*8)+','+v+' ';
	}
	document.getElementById('stoch').innerHTML=line('grid',23.5)+line('grid',58.5)+line('grid',92.5)+
		group(5,724,'<polyline class="ma d" points="'+d+'"/><polyline class="ma k" points="'+p+'"/>')+
		line('level dash',45.5)+line('low',109.5)+label('16293(8)',42)+label('16244(极)',106)+
		'<text x="3" y="13">Stoch(9,3,3) 18.1122 15.8317</text>';
}

function drawAxis()
{
	var s='',i,y;
	for(i=0;i<20;i++)
	{
		y=Math.round(15+i*32.74);
		s+='<path class="tick" d="M0 '+(y-0.5)+'h2"/><text x="5" y="'+(y+3)+'">'+(1.681-i*0.0025).toFixed(4)+'</text>';
	}
	s+='<rect x="2" y="480" width="34" height="11" fill="#fff"/><text class="now-text" x="5" y="489">1.6450</text>';
	document.getElementById('priceAxis').innerHTML=s;
	s='<path class="tick" d="M0 2.5h2M0 114.5h2"/>';
	var v=[[100,11],[80,27],[50,62],[20,96],[0,113]];
	for(i=0;i<v.length;i++) s+='<text x="2" y="'+v[i][1]+'">'+v[i][0]+'</text>';
	document.getElementById('stochAxis').innerHTML=s;
	s='';
	for(i=0;i<times.length;i++)
	{
		s+='<path class="tick" d="M'+(1.5+i*64)+' 0v3"/><text x="'+(i*64)+'" y="12">'+times[i]+'</text>';
	}
	document.getElementById('timeAxis').innerHTML=s;
}

drawPrice();
drawStoch();
drawAxis();
```
